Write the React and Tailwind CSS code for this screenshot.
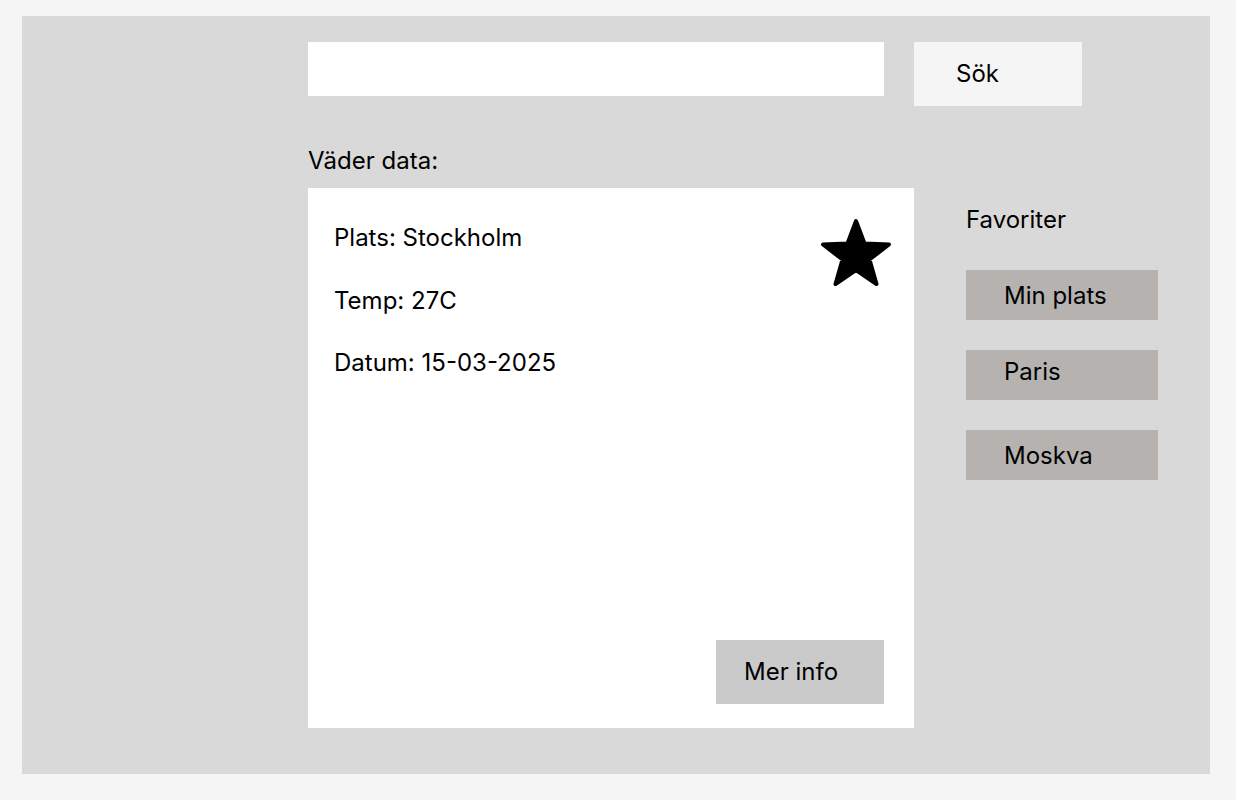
export default function App() {
  return (
    <div className="min-h-[800px] w-[1236px] bg-[#f5f5f5] pt-[16px] pl-[22px] text-black" style={{ fontFamily: 'Inter, "Noto Sans", sans-serif' }}>
      <div className="w-[1188px] h-[758px] bg-[#d9d9d9] pt-[26px] pl-[286px]">
        <div className="flex items-start">
          <input className="w-[576px] h-[54px] bg-white outline-none border-0" />
          <button className="ml-[30px] w-[168px] h-[64px] bg-[#f5f5f5] text-left pl-[42px] text-[24px] leading-[30px]">Sök</button>
        </div>
        <div className="mt-[40px] mb-[12px] text-[24px] leading-[30px]">Väder data:</div>
        <div className="flex items-start">
          <div className="relative w-[606px] h-[540px] bg-white pt-[35px] pl-[26px]">
            <div className="flex flex-col text-[24px] leading-[30px]">
              <div>Plats: Stockholm</div>
              <div className="mt-[33px]">Temp: 27C</div>
              <div className="mt-[32px]">Datum: 15-03-2025</div>
            </div>
            <svg className="absolute top-[30px] right-[22px]" width="72" height="70" viewBox="0 0 72 70">
              <polygon
                points="36,3 44.5,25.5 69,26.5 49.5,41.5 56.5,66 36,52 15.5,66 22.5,41.5 3,26.5 27.5,25.5"
                fill="#000"
                stroke="#000"
                strokeWidth="4"
                strokeLinejoin="round"
              />
            </svg>
            <button className="absolute bottom-[24px] right-[30px] w-[168px] h-[64px] bg-[#cacaca] text-left pl-[28px] text-[24px] leading-[30px]">Mer info</button>
          </div>
          <div className="ml-[52px] pt-[17px] flex flex-col">
            <div className="text-[24px] leading-[30px]">Favoriter</div>
            <div className="mt-[35px] flex flex-col gap-[30px]">
              <button className="w-[192px] h-[50px] bg-[#b5b2b0] text-left pl-[38px] pt-[2px] text-[24px] leading-[30px]">Min plats</button>
              <button className="w-[192px] h-[50px] bg-[#b5b2b0] text-left pl-[38px] pb-[6px] text-[24px] leading-[30px]">Paris</button>
              <button className="w-[192px] h-[50px] bg-[#b5b2b0] text-left pl-[38px] pt-[2px] text-[24px] leading-[30px]">Moskva</button>
            </div>
          </div>
        </div>
      </div>
    </div>
  );
}
